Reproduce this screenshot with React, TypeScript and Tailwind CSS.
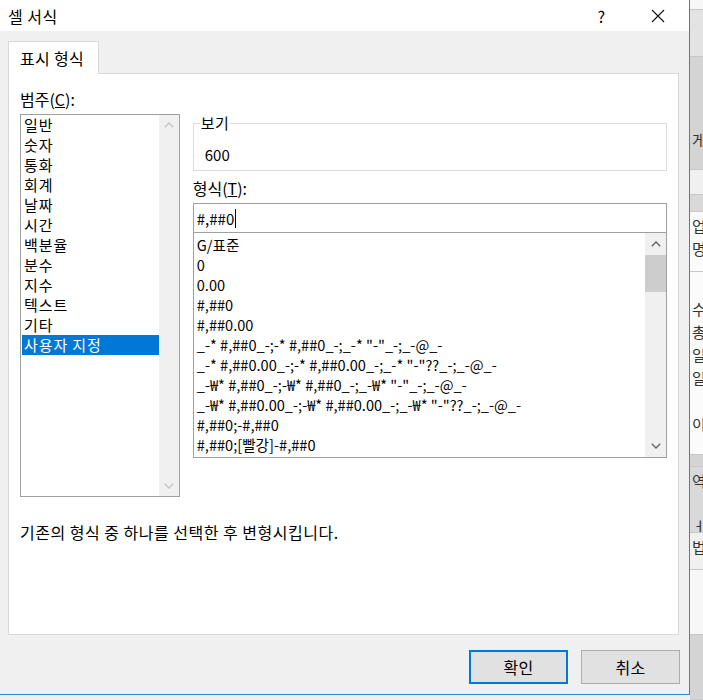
import React from "react";

const categories = ["일반", "숫자", "통화", "회계", "날짜", "시간", "백분율", "분수", "지수", "텍스트", "기타", "사용자 지정"];

const formats = [
  "G/표준",
  "0",
  "0.00",
  "#,##0",
  "#,##0.00",
  '_-* #,##0_-;-* #,##0_-;_-* "-"_-;_-@_-',
  '_-* #,##0.00_-;-* #,##0.00_-;_-* "-"??_-;_-@_-',
  '_-₩* #,##0_-;-₩* #,##0_-;_-₩* "-"_-;_-@_-',
  '_-₩* #,##0.00_-;-₩* #,##0.00_-;_-₩* "-"??_-;_-@_-',
  "#,##0;-#,##0",
  "#,##0;[빨강]-#,##0",
];

function ChevUp({ color }: { color: string }) {
  return (
    <svg width="10" height="6" viewBox="0 0 10 6">
      <path d="M0.8 5.2 L5 1 L9.2 5.2" fill="none" stroke={color} strokeWidth="1.3" />
    </svg>
  );
}
function ChevDown({ color }: { color: string }) {
  return (
    <svg width="10" height="6" viewBox="0 0 10 6">
      <path d="M0.8 0.8 L5 5 L9.2 0.8" fill="none" stroke={color} strokeWidth="1.3" />
    </svg>
  );
}

function Strip() {
  const blocks: { h: number; bg: string; items?: string[] }[] = [
    { h: 10, bg: "bg-[#f7f7f7]" },
    { h: 47, bg: "bg-[#e3e3e3]" },
    { h: 113, bg: "bg-[#d4d4d4]", items: ["", "", "", "게", ""] },
    { h: 25, bg: "bg-[#f0f0f0]" },
    { h: 17, bg: "bg-[#d9d9d9]" },
    { h: 60, bg: "bg-[#fbfbfb]", items: ["업", "명"] },
    { h: 183, bg: "bg-[#fbfbfb]", items: ["", "수", "총", "일", "일", "", "이"] },
    { h: 12, bg: "bg-[#d4d4d4]" },
    { h: 66, bg: "bg-[#d9d9d9]", items: ["역", "", "ㅓ"] },
    { h: 37, bg: "bg-[#f0f0f0]", items: ["법체"] },
    { h: 65, bg: "bg-[#f7f7f7]" },
    { h: 65, bg: "bg-[#d4d4d4]" },
  ];
  return (
    <div className="flex w-[13px] shrink-0 flex-col overflow-hidden">
      {blocks.map((b, i) => (
        <div key={i} className={`${b.bg} shrink-0 overflow-hidden border-b border-[#c8c8c8] pl-[2px] pt-[2px]`} style={{ height: b.h }}>
          {b.items?.map((t, j) => (
            <div key={j} className="h-[23px] whitespace-nowrap text-[15px] leading-[23px] text-[#333]">
              {t}
            </div>
          ))}
        </div>
      ))}
    </div>
  );
}

export default function App() {
  return (
    <div className="flex h-[700px] w-[703px] overflow-hidden bg-[#f0f0f0] font-['Noto_Sans_CJK_KR','Noto_Sans',sans-serif] text-[16px] text-black">
      <div className="flex h-[695px] w-[690px] shrink-0 flex-col border-b border-r border-[#2b86d6] bg-[#f0f0f0]">
        {/* title bar */}
        <div className="flex h-[31px] shrink-0 items-center bg-white pl-[8px]">
          <div className="text-[16px] leading-none tracking-[0.5px]">셀 서식</div>
          <div className="flex-1" />
          <div className="mr-[46px] text-[16px] leading-none">?</div>
          <svg width="14" height="14" viewBox="0 0 14 14" className="mr-[24px]">
            <path d="M1 1 L13 13 M13 1 L1 13" stroke="#111" strokeWidth="1.1" />
          </svg>
        </div>

        <div className="flex flex-1 flex-col px-[8px] pt-[10px]">
          {/* tab */}
          <div className="relative z-10 -mb-px flex h-[33px] w-[91px] items-center border border-b-0 border-[#d9d9d9] bg-white pl-[11px]">
            <span className="leading-none tracking-[0.3px]">표시 형식</span>
          </div>
          {/* panel */}
          <div className="flex h-[562px] w-[671px] flex-col border border-[#d9d9d9] bg-white px-[11px] pt-[15px]">
            <div className="flex gap-[13px]">
              {/* left column */}
              <div className="flex w-[160px] flex-col">
                <div className="h-[20px] leading-[20px]">범주(<span className="underline">C</span>):</div>
                <div className="mt-[5px] flex h-[383px] border border-[#a0a0a0] bg-white">
                  <div className="flex flex-1 flex-col pl-[1px] text-[15px]">
                    {categories.map((c, i) => (
                      <div
                        key={c}
                        className={
                          i === categories.length - 1
                            ? "h-[20px] bg-[#0078d7] pl-[2px] leading-[20px] tracking-[0.9px] text-white"
                            : "h-[20px] pl-[2px] leading-[20px] tracking-[0.9px]"
                        }
                      >
                        {c}
                      </div>
                    ))}
                  </div>
                  <div className="flex w-[20px] flex-col items-center justify-between bg-[#f0f0f0] py-[7px]">
                    <ChevUp color="#c4c4c4" />
                    <ChevDown color="#c4c4c4" />
                  </div>
                </div>
              </div>

              {/* right column */}
              <div className="flex w-[475px] flex-col">
                <fieldset className="mt-[26px] h-[56px] border border-[#dcdcdc] px-[6px]">
                  <legend className="px-[1px] text-[15px] leading-[16px] tracking-[0.4px]">보기</legend>
                  <div className="mt-[14px] pl-[5px] text-[15px] leading-[20px]">600</div>
                </fieldset>
                <div className="mt-[7px] h-[20px] leading-[20px]">형식(<span className="underline">T</span>):</div>
                <div className="mt-[5px] flex h-[30px] items-center border border-[#a0a0a0] bg-white pl-[3px]">
                  <span className="text-[15px] leading-none">#,##0</span>
                  <span className="ml-[1px] h-[19px] w-px bg-black" />
                </div>
                <div className="flex h-[225px] border border-t-0 border-[#a0a0a0] bg-white">
                  <div className="flex flex-1 flex-col overflow-hidden pl-[3px] pt-[2px] text-[14.6px]">
                    {formats.map((f) => (
                      <div key={f} className="h-[20px] whitespace-pre leading-[20px]">
                        {f}
                      </div>
                    ))}
                  </div>
                  <div className="flex w-[21px] flex-col bg-[#f0f0f0]">
                    <div className="flex h-[22px] items-center justify-center">
                      <ChevUp color="#606060" />
                    </div>
                    <div className="h-[37px] bg-[#cdcdcd]" />
                    <div className="flex-1" />
                    <div className="flex h-[22px] items-center justify-center">
                      <ChevDown color="#606060" />
                    </div>
                  </div>
                </div>
              </div>
            </div>
            <div className="mt-[25px] leading-[20px] tracking-[0.5px]">기존의 형식 중 하나를 선택한 후 변형시킵니다.</div>
          </div>

          {/* buttons */}
          <div className="mt-[15px] flex justify-end gap-[13px] pr-[1px]">
            <div className="flex h-[34px] w-[99px] items-center justify-center border-2 border-[#0078d7] bg-[#e1e1e1] tracking-[0.4px]">
              확인
            </div>
            <div className="flex h-[34px] w-[99px] items-center justify-center border border-[#adadad] bg-[#e1e1e1] tracking-[0.4px]">
              취소
            </div>
          </div>
        </div>
      </div>
      <Strip />
    </div>
  );
}
